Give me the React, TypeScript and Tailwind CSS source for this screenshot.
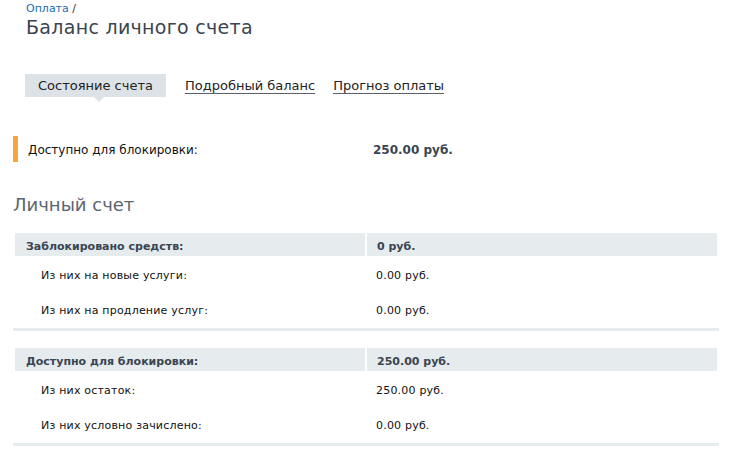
import React from "react";

const font = { fontFamily: '"DejaVu Sans", Verdana, sans-serif' };

function Table({
  head,
  headValue,
  rows,
}: {
  head: string;
  headValue: string;
  rows: [string, string][];
}) {
  return (
    <table className="w-[706px] border-separate border-spacing-[2px] border-b-[3px] border-[#e6ebee] text-[11px]">
      <tbody>
        <tr>
          <td className="h-[23px] w-[350px] bg-[#e6ebee] pl-[11px] pt-[4px] leading-[19px] font-bold text-[#3a4552] align-top">
            {head}
          </td>
          <td className="h-[23px] bg-[#e6ebee] pl-[10px] pt-[4px] leading-[19px] font-bold text-[#3a4552] align-top">
            {headValue}
          </td>
        </tr>
        {rows.map(([l, v]) => (
          <tr key={l}>
            <td className="h-[33px] pl-[26px] pt-[11px] leading-[14px] align-top tracking-[0.2px] text-[#111]">
              {l}
            </td>
            <td className="h-[33px] pl-[9px] pt-[11px] leading-[14px] align-top tracking-[0.2px] text-[#111]">
              {v}
            </td>
          </tr>
        ))}
      </tbody>
    </table>
  );
}

export default function App() {
  return (
    <div className="w-[738px] h-[464px] bg-white overflow-hidden pl-[13px]" style={font}>
      <div className="pl-[13px] pt-[2px] text-[11px] leading-[13px] text-[#333]">
        <a className="text-[#1a6db5]">Оплата</a> /
      </div>
      <h1 className="pl-[13px] text-[19px] leading-[24px] tracking-[0.3px] text-[#3b4450]">
        Баланс личного счета
      </h1>

      <div className="mt-[35px] ml-[12px] flex items-start text-[13px] text-[#222]">
        <div className="relative h-[23px] bg-[#dde2e6] px-[13px] leading-[23px]">
          Состояние счета
          <span className="absolute left-[69px] top-[23px] h-0 w-0 border-l-[5px] border-r-[5px] border-t-[5px] border-l-transparent border-r-transparent border-t-[#dde2e6]" />
        </div>
        <a className="ml-[19px] pt-[4px] leading-[15px] border-b border-[#5a6068]">
          Подробный баланс
        </a>
        <a className="ml-[18px] pt-[4px] leading-[15px] border-b border-[#5a6068]">
          Прогноз оплаты
        </a>
      </div>

      <div className="mt-[39px] flex h-[26px] items-center text-[12px]">
        <div className="h-[26px] w-[5px] bg-[#f7a43a]" />
        <div className="ml-[10px] w-[345px] pt-[1px] text-[#111]">Доступно для блокировки:</div>
        <div className="pt-[1px] font-bold text-[#3a4552]">250.00 руб.</div>
      </div>

      <h2 className="mt-[32px] text-[18px] leading-[22px] text-[#5b6570]">Личный счет</h2>

      <div className="mt-[15px]">
        <Table
          head="Заблокировано средств:"
          headValue="0 руб."
          rows={[
            ["Из них на новые услуги:", "0.00 руб."],
            ["Из них на продление услуг:", "0.00 руб."],
          ]}
        />
      </div>
      <div className="mt-[15px]">
        <Table
          head="Доступно для блокировки:"
          headValue="250.00 руб."
          rows={[
            ["Из них остаток:", "250.00 руб."],
            ["Из них условно зачислено:", "0.00 руб."],
          ]}
        />
      </div>
    </div>
  );
}
